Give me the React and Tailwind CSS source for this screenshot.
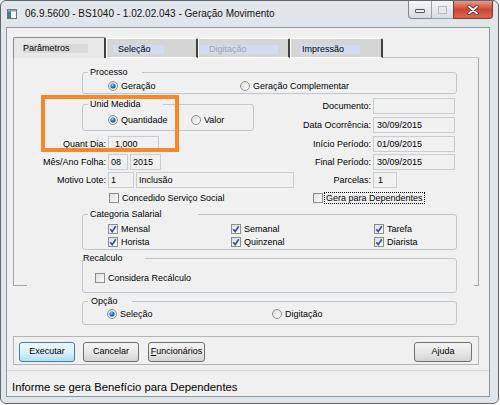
import React from "react";

function Radio({ on }) {
  return (
    <svg width="10" height="10" viewBox="0 0 10 10" className="shrink-0">
      <defs>
        <linearGradient id="rbg" x1="0" y1="0" x2="1" y2="1">
          <stop offset="0" stopColor="#d9d9d9" />
          <stop offset="1" stopColor="#ffffff" />
        </linearGradient>
        <radialGradient id="rdot" cx="0.4" cy="0.35" r="0.7">
          <stop offset="0" stopColor="#9fd8f7" />
          <stop offset="0.5" stopColor="#2f75bd" />
          <stop offset="1" stopColor="#174a8a" />
        </radialGradient>
      </defs>
      <circle cx="5" cy="5" r="4.5" fill="url(#rbg)" stroke="#8b8d8f" />
      {on && <circle cx="5" cy="5" r="2.6" fill="url(#rdot)" />}
    </svg>
  );
}

function Check({ on }) {
  return (
    <svg width="10" height="10" viewBox="0 0 10 10" className="shrink-0">
      <defs>
        <linearGradient id="cbg" x1="0" y1="0" x2="1" y2="1">
          <stop offset="0" stopColor="#dcdcdc" />
          <stop offset="1" stopColor="#ffffff" />
        </linearGradient>
      </defs>
      <rect x="0.5" y="0.5" width="9" height="9" fill="url(#cbg)" stroke="#8b8d8f" />
      {on && (
        <path d="M2.3 5.2 L4.2 7.6 L7.8 2.2" fill="none" stroke="#3b4f98" strokeWidth="1.7" />
      )}
    </svg>
  );
}

function Box({ className, children }) {
  return (
    <div className={"h-[16px] border border-[#c9cdd2] bg-[#f0f0f0] flex items-center whitespace-nowrap " + className}>
      {children}
    </div>
  );
}

function RightRow({ label, children }) {
  return (
    <div className="flex items-center">
      <span className="w-[76px] text-right whitespace-nowrap">{label}</span>
      <div className="ml-[2px]">{children}</div>
    </div>
  );
}

function Opt({ children, on, radio, className = "" }) {
  return (
    <div className={"flex items-center " + className}>
      {radio ? <Radio on={on} /> : <Check on={on} />}
      <span className="ml-[3px] whitespace-nowrap">{children}</span>
    </div>
  );
}

function Btn({ children, def, className }) {
  return (
    <button
      type="button"
      className={
        (def
          ? "border-[#3c7fb1] from-[#eef8fe] via-[#dcf1fc] to-[#b2ddf6] "
          : "border-[#707070] from-[#f4f4f4] via-[#e8e8e8] to-[#d3d3d3] ") +
        "h-[20px] border rounded-[3px] bg-linear-to-b flex items-center justify-center text-[9px] " +
        className
      }
    >
      {children}
    </button>
  );
}

function TitleBar() {
  return (
    <div className="h-[26px] flex items-start">
      <svg width="10" height="10" viewBox="0 0 10 10" className="ml-[6px] mt-[8px] shrink-0">
        <rect x="0.5" y="0.5" width="9" height="9" fill="#f3f5f7" stroke="#6b7580" />
        <rect x="1" y="1" width="3" height="8" fill="#3c8296" />
        <rect x="1" y="1" width="8" height="1.5" fill="#9aa6b2" />
      </svg>
      <span className="ml-[8px] mt-[7px] text-[10px] leading-[12px] text-[#111] whitespace-nowrap">
        06.9.5600 - BS1040 - 1.02.02.043 - Geração Movimento
      </span>
      <div className="ml-auto mr-[5px] flex h-[18px]">
        <div className="w-[23px] h-[18px] rounded-bl-[4px] border-l border-b border-[#7d8893] bg-linear-to-b from-[#f5f7f9] to-[#d5dbe2] flex items-center justify-center">
          <div className="mt-[3px] w-[10px] h-[4px] rounded-[1px] border border-[#4e5560] bg-[#eef0f2]" />
        </div>
        <div className="w-[22px] h-[18px] border-l border-b border-[#9aa4ae] bg-linear-to-b from-[#f5f7f9] to-[#d5dbe2] flex items-center justify-center">
          <div className="w-[9px] h-[8px] border border-[#b3bbc3] bg-[#e6e9ec]" />
        </div>
        <div className="w-[40px] h-[18px] rounded-br-[4px] border border-t-0 border-[#7a3a32] bg-linear-to-b from-[#e59a88] via-[#cc4733] to-[#d8674f] flex items-center justify-center">
          <svg width="12" height="10" viewBox="0 0 12 10">
            <path d="M2 1.5 L10 8.5 M10 1.5 L2 8.5" stroke="#5a2a24" strokeWidth="3.4" strokeLinecap="round" />
            <path d="M2 1.5 L10 8.5 M10 1.5 L2 8.5" stroke="#ffffff" strokeWidth="1.8" strokeLinecap="round" />
          </svg>
        </div>
      </div>
    </div>
  );
}

function Tab({ label, sel, disabled, tabW, hlCls }) {
  return (
    <div
      className={
        (sel
          ? "h-[21px] bg-[#e8e8e8] border-l border-t border-[#8c8c8c] "
          : "h-[20px] bg-[#d5d5d5] border-l border-t border-b border-[#ffffff] ") +
        "border-r-2 border-r-[#404040] rounded-t-[2px] " +
        tabW
      }
    >
      <div className={"mt-[6px] h-[9px] flex items-center text-[9px] leading-none whitespace-nowrap " + hlCls + (disabled ? " text-[#a3a3a3]" : "")}>
        {label}
      </div>
    </div>
  );
}

export default function App() {
  return (
    <div className="w-[500px] h-[405px] bg-white font-['Liberation_Sans',Arial,sans-serif] text-black">
      <div className="w-[499px] h-[404px] rounded-[6px] border border-[#5d6873] bg-[#e1e6eb] flex flex-col overflow-hidden">
        <TitleBar />
        <div className="ml-[5px] w-[484px] h-[370px] border border-[#8f989f] bg-[#f0f0f0] flex flex-col relative">
          {/* tabs */}
          <div className="mt-[9px] ml-[6px] w-[466px] h-[21px] flex items-end">
            <Tab sel label="Parâmetros" tabW="w-[93px]" hlCls="ml-[9px] w-[65px] bg-[#dadada]" />
            <Tab label="Seleção" tabW="w-[92px]" hlCls="ml-[6px] w-[51px] pl-[5px] bg-[#d3dcef]" />
            <Tab disabled label="Digitação" tabW="w-[92px]" hlCls="ml-[1px] w-[78px] pl-[9px] bg-[#d3dcef]" />
            <Tab label="Impressão" tabW="w-[93px]" hlCls="ml-[9px] w-[60px] pl-[2px] bg-[#d3dcef]" />
            <div className="flex-1 h-[1px] bg-[#c4c4c4]" />
          </div>

          {/* tab page */}
          <div className="ml-[6px] w-[466px] grid">
            <div className="col-start-1 row-start-1 self-start h-[228px] flex flex-col border-x border-[#a3a3a3]">
              <div className="flex-1" />
              <div className="flex">
                <div className="w-[13px] h-[1px] bg-[#a3a3a3]" />
                <div className="flex-1" />
                <div className="w-[4px] h-[1px] bg-[#a3a3a3]" />
              </div>
            </div>

            <div className="col-start-1 row-start-1 flex flex-col text-[9px] leading-[12px]">
              <fieldset className="mt-[8px] ml-[69px] w-[375px] border border-[#bcc6cf] rounded-[3px]">
                <legend className="ml-[5px] w-[54px] pl-[2px] h-[12px] leading-[12px]">Processo</legend>
                <div className="h-[15px] pl-[25px] flex items-center">
                  <Opt radio on className="w-[132px]">Geração</Opt>
                  <Opt radio>Geração Complementar</Opt>
                </div>
              </fieldset>

              <div className="mt-[4px] flex">
                <div className="w-[282px]">
                  <fieldset className="ml-[69px] w-[172px] border border-[#bcc6cf] rounded-[3px]">
                    <legend className="ml-[5px] w-[75px] pl-[2px] h-[12px] leading-[12px]">Unid Medida</legend>
                    <div className="h-[20px] pl-[25px] flex items-center">
                      <Opt radio on className="w-[83px]">Quantidade</Opt>
                      <Opt radio>Valor</Opt>
                    </div>
                  </fieldset>
                </div>
                <div className="flex flex-col gap-[3px]">
                  <RightRow label="Documento:">
                    <Box className="w-[82px]" />
                  </RightRow>
                  <RightRow label="Data Ocorrência:">
                    <Box className="w-[82px] pl-[3px]">30/09/2015</Box>
                  </RightRow>
                </div>
              </div>

              <div className="mt-[3px] flex items-center">
                <div className="w-[282px] flex items-center">
                  <span className="w-[93px] text-right">Quant Dia:</span>
                  <Box className="ml-[2px] w-[51px] pl-[6px]">1,000</Box>
                </div>
                <RightRow label="Início Período:">
                  <Box className="w-[82px] pl-[3px]">01/09/2015</Box>
                </RightRow>
              </div>

              <div className="mt-[2px] flex items-center">
                <div className="w-[282px] flex items-center">
                  <span className="w-[93px] text-right">Mês/Ano Folha:</span>
                  <Box className="ml-[2px] w-[20px] pl-[2px]">08</Box>
                  <Box className="ml-[2px] w-[31px] pl-[2px]">2015</Box>
                </div>
                <RightRow label="Final Período:">
                  <Box className="w-[82px] pl-[3px]">30/09/2015</Box>
                </RightRow>
              </div>

              <div className="mt-[2px] flex items-center">
                <div className="w-[282px] flex items-center">
                  <span className="w-[93px] text-right">Motivo Lote:</span>
                  <Box className="ml-[2px] w-[26px] pl-[2px]">1</Box>
                  <Box className="ml-[2px] w-[158px] pl-[2px]">Inclusão</Box>
                </div>
                <RightRow label="Parcelas:">
                  <Box className="w-[24px] pl-[4px]">1</Box>
                </RightRow>
              </div>

              <div className="mt-[4px] h-[12px] flex items-center">
                <div className="w-[282px] pl-[96px]">
                  <Opt>Concedido Serviço Social</Opt>
                </div>
                <div className="pl-[18px] flex items-center">
                  <Check />
                  <span className="ml-[1px] px-[1px] border border-dotted border-black leading-[10px] whitespace-nowrap">
                    Gera para Dependentes
                  </span>
                </div>
              </div>

              <fieldset className="mt-[4px] ml-[69px] w-[375px] border border-[#bcc6cf] rounded-[3px]">
                <legend className="ml-[5px] w-[110px] pl-[2px] h-[12px] leading-[12px]">Categoria Salarial</legend>
                <div className="pt-[2px] pb-[1px] pl-[25px] grid grid-cols-[123px_143px_1fr]">
                  <Opt on className="h-[13px]">Mensal</Opt>
                  <Opt on className="h-[13px]">Semanal</Opt>
                  <Opt on className="h-[13px]">Tarefa</Opt>
                  <Opt on className="h-[13px]">Horista</Opt>
                  <Opt on className="h-[13px]">Quinzenal</Opt>
                  <Opt on className="h-[13px]">Diarista</Opt>
                </div>
              </fieldset>

              <fieldset className="mt-[2px] ml-[69px] w-[375px] border border-[#bcc6cf] rounded-[3px]">
                <legend className="w-[62px] h-[12px] leading-[12px]">Recalculo</legend>
                <div className="pt-[8px] pb-[8px] pl-[12px]">
                  <Opt className="h-[12px]">Considera Recálculo</Opt>
                </div>
              </fieldset>

              <fieldset className="mt-[2px] ml-[69px] w-[375px] border border-[#bcc6cf] rounded-[3px]">
                <legend className="ml-[5px] w-[44px] pl-[3px] h-[12px] leading-[12px]">Opção</legend>
                <div className="pt-[1px] pb-[4px] pl-[24px] flex items-center">
                  <Opt radio on className="h-[12px] w-[165px]">Seleção</Opt>
                  <Opt radio className="h-[12px]">Digitação</Opt>
                </div>
              </fieldset>
            </div>
          </div>

          {/* buttons */}
          <div className="mt-[11px] ml-[6px] w-[466px] h-[29px] border border-[#b4b4b4] flex items-start pt-[5px] pl-[5px] pr-[6px]">
            <Btn def className="w-[56px]">Executar</Btn>
            <Btn className="ml-[8px] w-[56px]">Cancelar</Btn>
            <Btn className="ml-[9px] w-[57px]">
              <span className="underline">F</span>uncionários
            </Btn>
            <Btn className="ml-auto w-[58px]">Ajuda</Btn>
          </div>

          {/* status bar */}
          <div className="mt-[5px] h-[1px] bg-[#d9d9d9]" />
          <div className="h-[25px] pl-[5px] pt-[10px] text-[11.3px] leading-[13px] whitespace-nowrap">
            Informe se gera Benefício para Dependentes
          </div>

          {/* highlight annotation */}
          <div className="absolute left-[34px] top-[67px] w-[138px] h-[57px] border-4 border-[#f7862c]" />
        </div>
      </div>
    </div>
  );
}
